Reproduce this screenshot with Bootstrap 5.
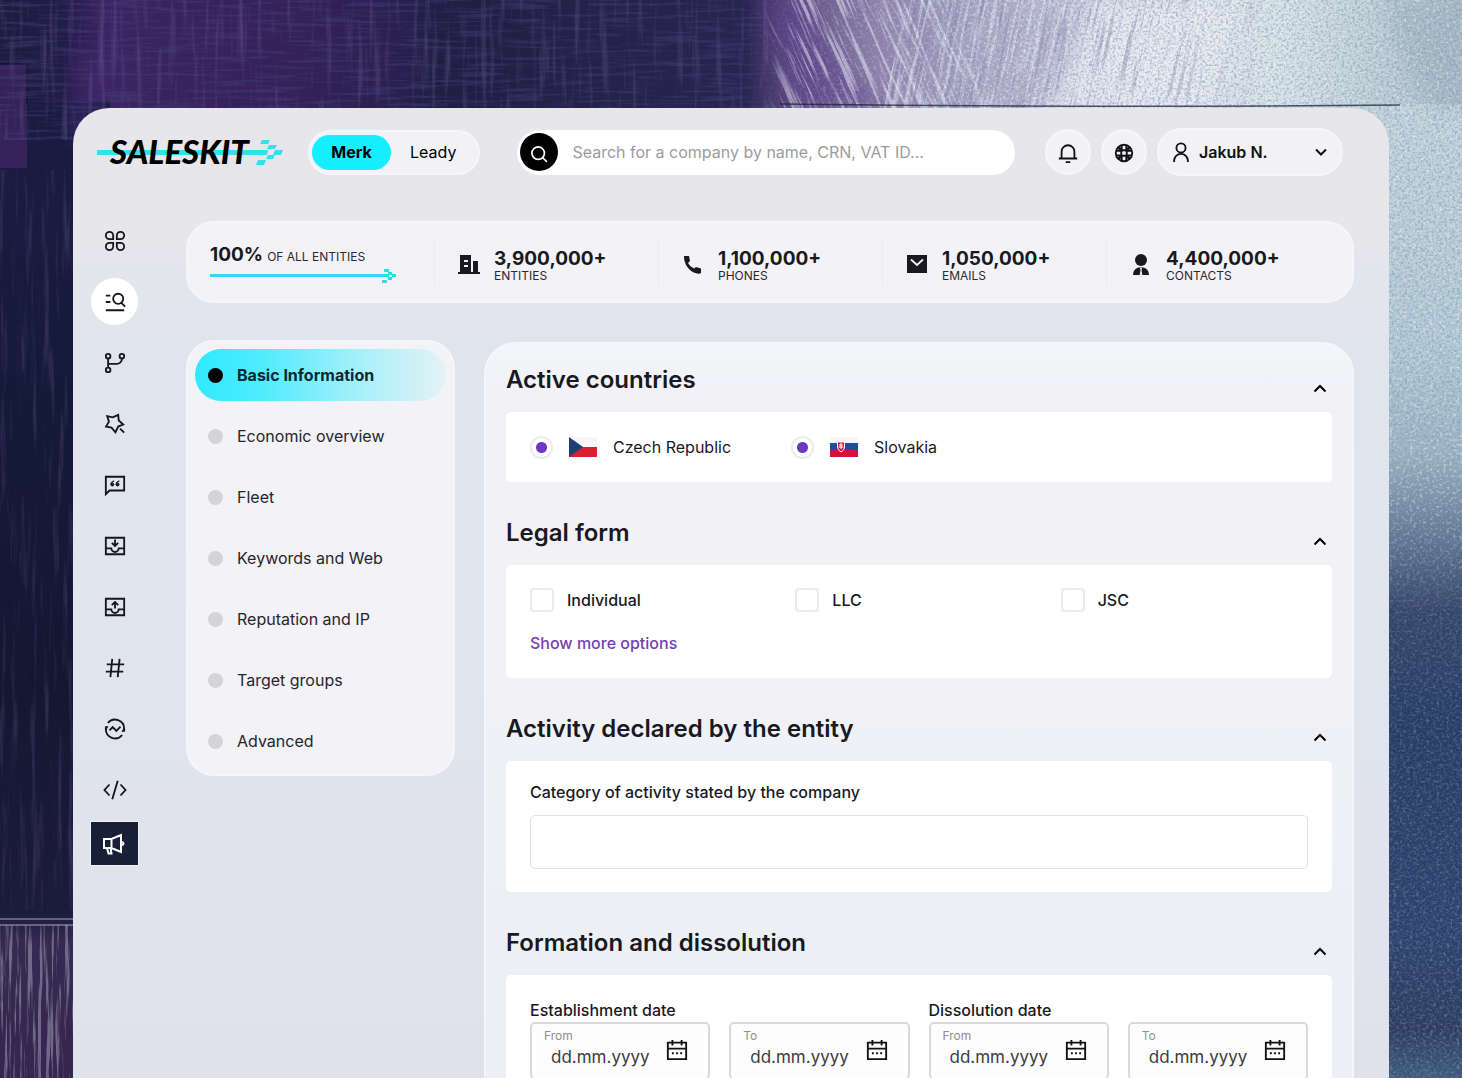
<!DOCTYPE html>
<html lang="en">
<head>
<meta charset="utf-8">
<meta name="viewport" content="width=device-width, initial-scale=1">
<title>Saleskit</title>
<link href="https://cdn.jsdelivr.net/npm/bootstrap@5.3.0/dist/css/bootstrap.min.css" rel="stylesheet">
<style>
  body { font-family: Inter, "Liberation Sans", sans-serif; font-size: 16px; line-height: 24px; color: #19191f; background: #181a3c; }
  .backdrop { position: fixed; inset: 0; width: 100%; height: 100%; z-index: -1; }
  .stage { padding: 108px 73px 0; overflow: hidden; }
  .shell { border-radius: 36px 36px 0 0; background: linear-gradient(180deg, #e7e6ea 0, #e6e6eb 130px, #e0e4ed 240px, #e1e5ed 480px, #dfe2eb 100%); }
  .ico { fill: none; stroke: currentColor; stroke-width: 2; flex: none; }
  a { color: inherit; text-decoration: none; }

  .topbar { padding: 20px 46px 0 24px; }
  .brand { flex: none; margin-right: 25px; }
  .brand-name { font: italic 900 33px Lato, "Liberation Sans", sans-serif; }
  .soft { background: #f2f2f6; border: 2px solid #f6f6f9; }
  .switch { height: 45px; padding: 3px 22px 3px 2px; gap: 19px; margin-right: 37px; }
  .switch button { height: 35px; line-height: 35px; border: 0; background: none; padding: 0; }
  .switch .on { width: 79px; background: #14eefe; font-weight: 700; }
  .finder { height: 45px; padding-left: 3px; background: #fff; margin-right: 30px; }
  .finder button { width: 38px; height: 38px; background: #000; color: #fff; border: 0; padding: 0; flex: none; }
  .finder input { border: 0; background: none; padding: 0 14px; box-shadow: none; font-size: 16px; }
  .finder input::placeholder { color: #9c9c9e; }
  .tools { gap: 10px; }
  .round { width: 46px; height: 46px; padding: 0; color: #111; }
  .who { width: 186px; height: 48px; padding: 0 12px; color: #111; font-weight: 600; }

  .body { padding: 0 35px 0 18px; margin-top: 45px; gap: 48px; }
  .rail { width: 47px; flex: none; gap: 14px; margin-top: -4px; }
  .rail a { width: 47px; height: 47px; color: #16161d; }
  .rail .on { background: #fff; border-radius: 50%; }
  .rail .promo { height: 43px; margin-top: -5px; background: #172036; color: #fff; box-shadow: 0 0 0 1px #eef2f8; }

  .pane { background: #f2f2f7; border: 2px solid #f5f6fa; border-radius: 28px; }
  .stats { padding: 14px 22px; }
  .stat { flex: 0 0 20%; height: 50px; }
  .stat + .stat { border-left: 1px solid #ececf1; padding: 6px 0 0 23px; gap: 14px; }
  .figure-lg { font-size: 19px; line-height: 20px; font-weight: 700; }
  .caption { font-size: 12px; line-height: 13px; color: #2a2a30; }
  .share { padding-top: 8px; }
  .share svg { margin-top: 1px; }

  .split { gap: 29px; margin-top: 37px; }
  .menu { width: 269px; flex: none; padding: 7px; gap: 9px; background: #f2f2f7; }
  .menu a { height: 52px; border-radius: 26px; padding-left: 13px; gap: 14px; color: #26262c; }
  .menu a::before { content: ""; width: 15px; height: 15px; border-radius: 50%; background: #d3d3d8; }
  .menu .on { background: linear-gradient(90deg, #2fe9fe 0, #52ecfd 28%, #a5f0f9 65%, #d6f2f6 92%, #e6f2f7 100%); color: #0a2a30; font-weight: 700; }
  .menu .on::before { background: #000; }

  .filters { margin-top: 2px; padding: 18px 20px 24px 20px; border-radius: 32px 32px 0 0; background: linear-gradient(180deg, #f2f5f9 0, #f1f1f6 60px, #f1f1f6 340px, #ecf0f4 560px, #ecf0f4 100%); }
  .group { margin-bottom: 33px; }
  .group-head { height: 36px; margin-bottom: 14px; }
  .group-head h2 { font-size: 24px; line-height: 36px; font-weight: 600; margin: 0; }
  .group-head button { border: 0; background: none; padding: 0; width: 24px; height: 18px; line-height: 0; }
  .sheet { background: #fff; border-radius: 5px; padding: 23px 24px; }
  .pick { height: 24px; }
  .sheet .form-check-input { margin: 0; float: none; width: 24px; height: 24px; border: 2px solid #ebebee; box-shadow: none; flex: none; }
  .sheet .form-check-input[type=radio] { width: 23px; height: 23px; background: radial-gradient(circle, #6f38c0 5px, #fff 6px); }
  .triple { grid-template-columns: repeat(3, 1fr); gap: 18px; }
  .triple .pick { gap: 13px; }
  .more { color: #7340b4; font-weight: 500; width: fit-content; margin-top: 19px; }
  .category { padding-top: 19px; }
  .category label { margin-bottom: 11px; }
  .field { height: 54px; border: 1px solid #e2e2e6; border-radius: 5px; box-shadow: none; }
  .fw-m { font-weight: 500; }
  .pair { grid-template-columns: 1fr 1fr; gap: 0 19px; }
  .date { height: 58px; border: 2px solid #d9d9dc; border-radius: 5px; padding: 4px 20px 0 12px; background: #fdfdfd; }
  .date label { font-size: 12px; line-height: 16px; color: #8f8f94; }
  .date input { display: block; border: 0; background: none; padding: 0 0 0 7px; width: 100%; height: 26px; outline: 0; font-size: 17px; color: #333; }
  .date input::placeholder { color: #3c3c40; }
  .date button { border: 0; background: none; padding: 0; color: #111; line-height: 0; margin-top: 11px; }
</style>
<script src="https://cdn.jsdelivr.net/npm/bootstrap@5.3.0/dist/js/bootstrap.bundle.min.js"></script>
</head>
<body>
<svg class="backdrop" viewBox="0 0 1462 1078" preserveAspectRatio="none" aria-hidden="true">
  <defs>
    <linearGradient id="top" x1="0" x2="1"><stop offset="0" stop-color="#1c1b41"/><stop offset=".045" stop-color="#221c48"/><stop offset=".07" stop-color="#3b2463"/><stop offset=".2" stop-color="#342159"/><stop offset=".27" stop-color="#2a2050"/><stop offset=".3" stop-color="#201e45"/><stop offset=".51" stop-color="#292450"/><stop offset=".54" stop-color="#5b4880"/><stop offset=".6" stop-color="#8d80aa"/><stop offset=".68" stop-color="#aeaac6"/><stop offset=".78" stop-color="#d5d8e4"/><stop offset=".87" stop-color="#dbe6ea"/><stop offset="1" stop-color="#aabec8"/></linearGradient>
    <linearGradient id="left" x2="0" y2="1"><stop offset="0" stop-color="#1b1b43"/><stop offset=".3" stop-color="#151a39"/><stop offset=".6" stop-color="#141732"/><stop offset=".83" stop-color="#1b1b3b"/><stop offset=".86" stop-color="#342b50"/><stop offset="1" stop-color="#35264f"/></linearGradient>
    <linearGradient id="right" x2="0" y2="1"><stop offset="0" stop-color="#c3d5db"/><stop offset=".25" stop-color="#b3cad4"/><stop offset=".36" stop-color="#9db3c3"/><stop offset=".43" stop-color="#6c809a"/><stop offset=".52" stop-color="#34456a"/><stop offset=".64" stop-color="#263c64"/><stop offset=".85" stop-color="#2c426c"/><stop offset=".95" stop-color="#2b3c60"/><stop offset="1" stop-color="#3d5a7c"/></linearGradient>
    <linearGradient id="fade" x1="0" x2="1"><stop offset="0" stop-color="#000"/><stop offset=".6" stop-color="#fff"/></linearGradient>
    <linearGradient id="calm" x2="0" y2="1"><stop offset="0" stop-color="#fff"/><stop offset=".45" stop-color="#fff"/><stop offset=".55" stop-color="#666"/><stop offset="1" stop-color="#777"/></linearGradient>
    <linearGradient id="edge" x1="0" x2="1"><stop offset="0" stop-color="#000"/><stop offset=".06" stop-color="#fff"/><stop offset=".75" stop-color="#fff"/><stop offset="1" stop-color="#000"/></linearGradient>
    <mask id="m"><rect x="740" y="0" width="400" height="200" fill="url(#fade)"/><rect x="1140" width="322" height="1078" fill="url(#calm)"/></mask>
    <mask id="me"><rect x="762" y="0" width="520" height="140" fill="url(#edge)"/></mask>
    <filter id="blur" x="-20%" y="-20%" width="140%" height="140%"><feGaussianBlur stdDeviation="9"/></filter>
    <filter id="grain" x="0" y="0" width="100%" height="100%"><feTurbulence type="fractalNoise" baseFrequency=".38 .42" numOctaves="3" seed="4"/><feColorMatrix values="0 0 0 0 .22  0 0 0 0 .3  0 0 0 0 .45  3.2 0 0 0 -1.4"/></filter>
    <filter id="glint" x="0" y="0" width="100%" height="100%"><feTurbulence type="fractalNoise" baseFrequency=".3 .36" numOctaves="3" seed="9"/><feColorMatrix values="0 0 0 0 .92  0 0 0 0 .95  0 0 0 0 1  4 0 0 0 -2.1"/></filter>
    <filter id="brush" x="0" y="0" width="100%" height="100%"><feTurbulence type="fractalNoise" baseFrequency=".16 .01" numOctaves="4" seed="7"/><feColorMatrix values="0 0 0 0 .42  0 0 0 0 .3  0 0 0 0 .62  3 0 0 0 -1.6"/></filter>
    <filter id="brushlight" x="0" y="0" width="100%" height="100%"><feTurbulence type="fractalNoise" baseFrequency=".26 .012" numOctaves="4" seed="15"/><feColorMatrix values="0 0 0 0 .86  0 0 0 0 .86  0 0 0 0 .96  6 0 0 0 -3"/></filter>
    <filter id="brushdark" x="0" y="0" width="100%" height="100%"><feTurbulence type="fractalNoise" baseFrequency=".3 .012" numOctaves="4" seed="23"/><feColorMatrix values="0 0 0 0 .2  0 0 0 0 .18  0 0 0 0 .36  6 0 0 0 -3.3"/></filter>
    <filter id="weave" x="0" y="0" width="100%" height="100%"><feTurbulence type="fractalNoise" baseFrequency=".02 .3" numOctaves="3" seed="2"/><feColorMatrix values="0 0 0 0 .06  0 0 0 0 .06  0 0 0 0 .2  4 0 0 0 -1.9"/></filter>
  </defs>
  <rect width="1462" height="140" fill="url(#top)"/>
  <rect y="100" width="110" height="978" fill="url(#left)"/>
  <rect x="1352" y="104" width="110" height="974" fill="url(#right)"/>
  <rect y="64" width="27" height="104" fill="#3c2460" opacity=".8"/>
  <path d="M0 64h30M27 64v40" stroke="#12122c" stroke-width="2" opacity=".6"/>
  <rect x="70" y="50" width="34" height="90" fill="#4b2b75" opacity=".4" filter="url(#blur)"/>
  <path d="M765 0h40q25 70 90 108H800Q775 50 765 0z" fill="#5d3f8c" opacity=".55" filter="url(#blur)"/>
  <path d="M1090 0h150q-5 70-55 140h-160q50-60 65-140z" fill="#e9eef3" opacity=".8" filter="url(#blur)"/>
  <path d="M1385 0h80v110h-30q-40-50-50-110z" fill="#9db2bd" opacity=".5" filter="url(#blur)"/>
  <rect width="770" height="140" filter="url(#brush)" opacity=".22"/>
  <rect width="770" height="140" filter="url(#weave)" opacity=".4"/>
  <g mask="url(#me)">
    <g transform="rotate(-24 900 50)"><rect x="700" y="-200" width="260" height="500" filter="url(#brushlight)" opacity=".55"/></g>
    <g transform="rotate(12 1060 50)"><rect x="900" y="-200" width="420" height="500" filter="url(#brushlight)" opacity=".5"/><rect x="900" y="-200" width="420" height="500" filter="url(#brushdark)" opacity=".4"/></g>
  </g>
  <g mask="url(#m)"><rect x="740" width="722" height="1078" filter="url(#grain)" opacity=".55"/><rect x="740" width="722" height="1078" filter="url(#glint)" opacity=".4"/></g>
  <rect y="170" width="80" height="740" filter="url(#brush)" opacity=".2"/>
  <rect y="925" width="80" height="153" filter="url(#brushlight)" opacity=".32"/>
  <path d="M0 919h74M0 925h74" stroke="#b9b2d0" stroke-width="1.5" opacity=".6"/>
  <path d="M780 104q300 4 620 1" stroke="#1d2138" stroke-width="1.5" fill="none" opacity=".75"/>
</svg>

<div class="stage vh-100">
  <div class="shell h-100">
    <header class="topbar d-flex align-items-center">
      <a class="brand" href="#" aria-label="Saleskit home">
        <svg width="186" height="38" viewBox="0 0 186 38">
          <path d="M0 17h13l-1 5H-1zM152 17h19l-1 5h-19z M165 7h8l-2 4h-8z M172 12h8l-2 4h-8z M178 17h8l-2 5h-8z M171 22h7l-2 4h-7z M161 27h8l-2 5h-8z" fill="#35dff0"/>
          <path d="M10 17h142v5H10z" fill="#35dff0"/>
          <text class="brand-name" x="13" y="31">SALESKIT</text>
        </svg>
      </a>
      <div class="switch soft rounded-pill d-flex align-items-center" role="group" aria-label="Product">
        <button class="on rounded-pill" type="button">Merk</button>
        <button type="button">Leady</button>
      </div>
      <form class="finder rounded-pill d-flex align-items-center flex-grow-1">
        <button class="rounded-circle" type="button" aria-label="Search"><svg class="ico" width="20" height="20" viewBox="0 0 24 24"><circle cx="11" cy="11" r="7.5"/><path d="m16.5 16.5 5 5"/></svg></button>
        <input class="form-control" type="search" aria-label="Search companies" placeholder="Search for a company by name, CRN, VAT ID...">
      </form>
      <div class="tools d-flex align-items-center flex-shrink-0">
        <button class="btn soft round rounded-circle" type="button" aria-label="Notifications"><svg class="ico" width="22" height="22" viewBox="0 0 24 24"><path d="M5 18v-7.500a7 7 0 0 1 14 0V18M2 18h20M9.500 22h5"/></svg></button>
        <button class="btn soft round rounded-circle" type="button" aria-label="Help"><svg class="ico" width="22" height="22" viewBox="0 0 24 24"><circle cx="12" cy="12" r="9"/><rect x="9" y="9" width="6" height="6" rx="2"/><path d="M9.500 3.500v6M14.500 3.500v6M9.500 14.500v6M14.500 14.500v6M3.500 9.500h6M3.500 14.500h6M14.500 9.500h6M14.500 14.500h6"/><path stroke-width="3" d="m5.500 5.500 3 3M18.500 5.500l-3 3M5.500 18.500l3-3M18.500 18.500l-3-3"/></svg></button>
        <button class="btn soft who rounded-pill d-flex align-items-center" type="button">
          <svg class="ico" width="20" height="22" viewBox="0 0 20 24"><circle cx="10" cy="7.500" r="5"/><path d="M2.500 23v-1.500a7.500 7.500 0 0 1 15 0V23"/></svg>
          <span class="ms-2">Jakub N.</span>
          <svg class="ico ms-auto" width="16" height="16" viewBox="0 0 16 16"><path d="m3 5.500 5 5 5-5"/></svg>
        </button>
      </div>
    </header>

    <div class="body d-flex">
      <nav class="rail d-flex flex-column" aria-label="Tools">
        <a class="d-flex align-items-center justify-content-center" href="#" aria-label="Dashboard"><svg class="ico" width="22" height="22" viewBox="0 0 24 24"><path d="M10 10V6a4 4 0 1 0-4 4zM14 10V6a4 4 0 1 1 4 4zM10 14v4a4 4 0 1 1-4-4zM14 14v4a4 4 0 1 0 4-4z"/></svg></a>
        <a class="on d-flex align-items-center justify-content-center" href="#" aria-label="Search"><svg class="ico" width="22" height="22" viewBox="0 0 24 24"><path d="M2 5h5M2 12h5M2 21h20M18.500 12.500 23 17"/><circle cx="15.500" cy="8.500" r="5.500"/></svg></a>
        <a class="d-flex align-items-center justify-content-center" href="#" aria-label="Relations"><svg class="ico" width="22" height="22" viewBox="0 0 24 24"><circle cx="4.500" cy="4.500" r="2.500"/><circle cx="4.500" cy="19.500" r="2.500"/><circle cx="19.500" cy="4.500" r="2.500"/><path d="M4.500 7v10M4.500 13h9.500a5.500 5.500 0 0 0 5.500-5.500V7"/></svg></a>
        <a class="d-flex align-items-center justify-content-center" href="#" aria-label="Similar"><svg class="ico" width="22" height="22" viewBox="0 0 24 24"><path d="m3.500 3.500 6 1.200L15.500 2l.6 6.200L21 12.500l-5.500 2.300L12.500 21l-4.300-5-6-1.200 3.200-5.300zM17.500 17l4.500 4.500"/></svg></a>
        <a class="d-flex align-items-center justify-content-center" href="#" aria-label="Notes"><svg class="ico" width="22" height="22" viewBox="0 0 24 24"><path d="M2 22V3h20v15H6z"/><path stroke-width="1" fill="currentColor" d="M10.800 7.500c-3 .8-3.600 2.600-3.400 4.200.2 2 3.400 1.900 3.400-.2 0-1.200-1-1.700-1.900-1.500 0-.9.900-1.600 1.900-2zM16.500 7.500c-3 .8-3.600 2.600-3.400 4.200.2 2 3.400 1.900 3.400-.2 0-1.200-1-1.700-1.900-1.500 0-.9.900-1.600 1.900-2z"/></svg></a>
        <a class="d-flex align-items-center justify-content-center" href="#" aria-label="Import"><svg class="ico" width="22" height="22" viewBox="0 0 24 24"><path d="M2 3h20v18H2zM2 14.500h6a4 4 0 0 0 8 0h6M12 5v6.500M8.500 8.500l3.500 3.500 3.500-3.500"/></svg></a>
        <a class="d-flex align-items-center justify-content-center" href="#" aria-label="Export"><svg class="ico" width="22" height="22" viewBox="0 0 24 24"><path d="M2 3h20v18H2zM2 14.500h6a4 4 0 0 0 8 0h6M12 13.500V7M8.500 10 12 6.500l3.500 3.500"/></svg></a>
        <a class="d-flex align-items-center justify-content-center" href="#" aria-label="Numbers"><svg class="ico" width="22" height="22" viewBox="0 0 24 24"><path d="M9 2 7 22M17 2l-2 20M3 8h19M2 16h19"/></svg></a>
        <a class="d-flex align-items-center justify-content-center" href="#" aria-label="Monitoring"><svg class="ico" width="22" height="22" viewBox="0 0 24 24"><path d="M4.200 5.500A10 10 0 0 1 22 12v2M19.800 18.500A10 10 0 0 1 2 12v-2M6 13.500l3.500-3.500 4 4 4.500-4.500"/><path fill="currentColor" stroke="none" d="M1 9h4l-3 5zM23 15h-4l3-5z"/></svg></a>
        <a class="d-flex align-items-center justify-content-center" href="#" aria-label="API"><svg class="ico" width="24" height="22" viewBox="0 0 26 24"><path d="m7 6-5.500 6L7 18M19 6l5.500 6-5.500 6M16 2l-6 20"/></svg></a>
        <a class="promo d-flex align-items-center justify-content-center" href="#" aria-label="News"><svg class="ico" width="24" height="24" viewBox="0 0 24 24"><path d="M1 7h7.500L18 3v17l-9.500-4H1zM8.500 7v9M4 16l1.500 5.500h3L7.500 16M18 10q2.500 0 2.500 1.500T18 13"/></svg></a>
      </nav>

      <main class="flex-grow-1">
        <section class="pane stats d-flex" aria-label="Database size">
          <div class="stat share">
            <div class="d-flex align-items-baseline"><span class="figure-lg me-1">100%</span><span class="caption">OF ALL ENTITIES</span></div>
            <svg class="d-block" width="186" height="18" viewBox="0 0 186 18"><path d="M0 8h176v3H0z" fill="#2edbea"/><path d="M174 3h5v3h-5zM178 6h4v3h-4zM182 8h4v3h-4zM178 11h4v3h-4zM172 14h5v3h-5zM176 8h3v3h-3z" fill="#2edbea"/></svg>
          </div>
          <div class="stat d-flex align-items-center">
            <svg width="22" height="22" viewBox="0 0 22 22" fill="#19191f"><path fill-rule="evenodd" d="M2 1h11v17h2V7h5v11h2v2H0v-2h2zM6 6v2h4V6zm0 5v2h4v-2z"/></svg>
            <div><div class="figure-lg">3,900,000+</div><div class="caption">ENTITIES</div></div>
          </div>
          <div class="stat d-flex align-items-center">
            <svg width="22" height="22" viewBox="0 0 22 22" fill="#19191f"><path d="M2 2h5l1 5-2 2q2 4 6 5.500l2-1.500 5 1.500V19q-1 1-4 .5Q8 18 4 11 1.500 6 2 2z"/></svg>
            <div><div class="figure-lg">1,100,000+</div><div class="caption">PHONES</div></div>
          </div>
          <div class="stat d-flex align-items-center">
            <svg width="22" height="22" viewBox="0 0 22 22"><path d="M1 1h20v18H1z" fill="#19191f"/><path d="m5 5.500 6 5.500 6-5.500" fill="none" stroke="#f2f2f7" stroke-width="1.800"/></svg>
            <div><div class="figure-lg">1,050,000+</div><div class="caption">EMAILS</div></div>
          </div>
          <div class="stat d-flex align-items-center">
            <svg width="22" height="22" viewBox="0 0 22 22" fill="#19191f"><circle cx="11" cy="6" r="6"/><path fill-rule="evenodd" d="M3 21q0-6 5.500-7.500h5Q19 15 19 21zM10 14l.5 2-.8 5h2.600l-.8-5 .5-2z"/></svg>
            <div><div class="figure-lg">4,400,000+</div><div class="caption">CONTACTS</div></div>
          </div>
        </section>

        <div class="split d-flex align-items-start">
          <nav class="pane menu d-flex flex-column" aria-label="Filter sections">
            <a class="on d-flex align-items-center" href="#">Basic Information</a>
            <a class="d-flex align-items-center" href="#">Economic overview</a>
            <a class="d-flex align-items-center" href="#">Fleet</a>
            <a class="d-flex align-items-center" href="#">Keywords and Web</a>
            <a class="d-flex align-items-center" href="#">Reputation and IP</a>
            <a class="d-flex align-items-center" href="#">Target groups</a>
            <a class="d-flex align-items-center" href="#">Advanced</a>
          </nav>

          <form class="pane filters flex-grow-1">
            <section class="group">
              <div class="group-head d-flex justify-content-between align-items-end"><h2>Active countries</h2><button type="button" aria-label="Collapse Active countries"><svg class="ico" width="16" height="16" viewBox="0 0 16 16"><path d="m2.500 10.500 5.500-5.500 5.500 5.500"/></svg></button></div>
              <div class="sheet d-flex">
                <div class="pick d-flex align-items-center me-5 pe-2">
                  <input class="form-check-input" type="radio" name="cz" id="cz">
                  <label class="d-flex align-items-center ms-3" for="cz"><svg class="me-3" width="28" height="20" viewBox="0 0 28 20"><path d="M0 0h28v10H0z" fill="#f6f6f8"/><path d="M0 10h28v10H0z" fill="#d8202e"/><path d="m0 0 14 10L0 20z" fill="#1d4173"/></svg>Czech Republic</label>
                </div>
                <div class="pick d-flex align-items-center ms-1">
                  <input class="form-check-input" type="radio" name="sk" id="sk">
                  <label class="d-flex align-items-center ms-3" for="sk"><svg class="me-3" width="28" height="20" viewBox="0 0 28 20"><path d="M0 0h28v6H0z" fill="#f6f6f8"/><path d="M0 6h28v7H0z" fill="#1b4f9c"/><path d="M0 13h28v7H0z" fill="#d3133a"/><path d="M7.500 5h7v5q0 3-3.500 5-3.500-2-3.500-5z" fill="#d3133a" stroke="#fff"/><path d="M11 6v6M9 8h4M8.500 10h5" stroke="#fff"/></svg>Slovakia</label>
                </div>
              </div>
            </section>

            <section class="group">
              <div class="group-head d-flex justify-content-between align-items-end"><h2>Legal form</h2><button type="button" aria-label="Collapse Legal form"><svg class="ico" width="16" height="16" viewBox="0 0 16 16"><path d="m2.500 10.500 5.500-5.500 5.500 5.500"/></svg></button></div>
              <div class="sheet">
                <div class="triple d-grid fw-m">
                  <div class="pick d-flex align-items-center"><input class="form-check-input" type="checkbox" id="individual"><label for="individual">Individual</label></div>
                  <div class="pick d-flex align-items-center"><input class="form-check-input" type="checkbox" id="llc"><label for="llc">LLC</label></div>
                  <div class="pick d-flex align-items-center"><input class="form-check-input" type="checkbox" id="jsc"><label for="jsc">JSC</label></div>
                </div>
                <a class="more d-block" href="#">Show more options</a>
              </div>
            </section>

            <section class="group">
              <div class="group-head d-flex justify-content-between align-items-end"><h2>Activity declared by the entity</h2><button type="button" aria-label="Collapse Activity declared by the entity"><svg class="ico" width="16" height="16" viewBox="0 0 16 16"><path d="m2.500 10.500 5.500-5.500 5.500 5.500"/></svg></button></div>
              <div class="sheet category">
                <label class="fw-m d-block" for="category">Category of activity stated by the company</label>
                <input class="field form-control" type="text" id="category">
              </div>
            </section>

            <section class="group">
              <div class="group-head d-flex justify-content-between align-items-end"><h2>Formation and dissolution</h2><button type="button" aria-label="Collapse Formation and dissolution"><svg class="ico" width="16" height="16" viewBox="0 0 16 16"><path d="m2.500 10.500 5.500-5.500 5.500 5.500"/></svg></button></div>
              <div class="sheet pair d-grid">
                <div>
                  <div class="fw-m">Establishment date</div>
                  <div class="pair d-grid">
                    <div class="date d-flex align-items-start"><div class="flex-grow-1"><label class="d-block" for="ef">From</label><input type="text" id="ef" placeholder="dd.mm.yyyy"></div><button type="button" aria-label="Pick establishment from"><svg class="ico" width="22" height="22" viewBox="0 0 24 24"><path d="M2 4h20v18H2zM2 10.500h20M7 1v6M17 1v6M6.500 15.500h2M11 15.500h2M15.500 15.500h2"/></svg></button></div>
                    <div class="date d-flex align-items-start"><div class="flex-grow-1"><label class="d-block" for="et">To</label><input type="text" id="et" placeholder="dd.mm.yyyy"></div><button type="button" aria-label="Pick establishment to"><svg class="ico" width="22" height="22" viewBox="0 0 24 24"><path d="M2 4h20v18H2zM2 10.500h20M7 1v6M17 1v6M6.500 15.500h2M11 15.500h2M15.500 15.500h2"/></svg></button></div>
                  </div>
                </div>
                <div>
                  <div class="fw-m">Dissolution date</div>
                  <div class="pair d-grid">
                    <div class="date d-flex align-items-start"><div class="flex-grow-1"><label class="d-block" for="df">From</label><input type="text" id="df" placeholder="dd.mm.yyyy"></div><button type="button" aria-label="Pick dissolution from"><svg class="ico" width="22" height="22" viewBox="0 0 24 24"><path d="M2 4h20v18H2zM2 10.500h20M7 1v6M17 1v6M6.500 15.500h2M11 15.500h2M15.500 15.500h2"/></svg></button></div>
                    <div class="date d-flex align-items-start"><div class="flex-grow-1"><label class="d-block" for="dt">To</label><input type="text" id="dt" placeholder="dd.mm.yyyy"></div><button type="button" aria-label="Pick dissolution to"><svg class="ico" width="22" height="22" viewBox="0 0 24 24"><path d="M2 4h20v18H2zM2 10.500h20M7 1v6M17 1v6M6.500 15.500h2M11 15.500h2M15.500 15.500h2"/></svg></button></div>
                  </div>
                </div>
              </div>
            </section>
          </form>
        </div>
      </main>
    </div>
  </div>
</div>
</body>
</html>
